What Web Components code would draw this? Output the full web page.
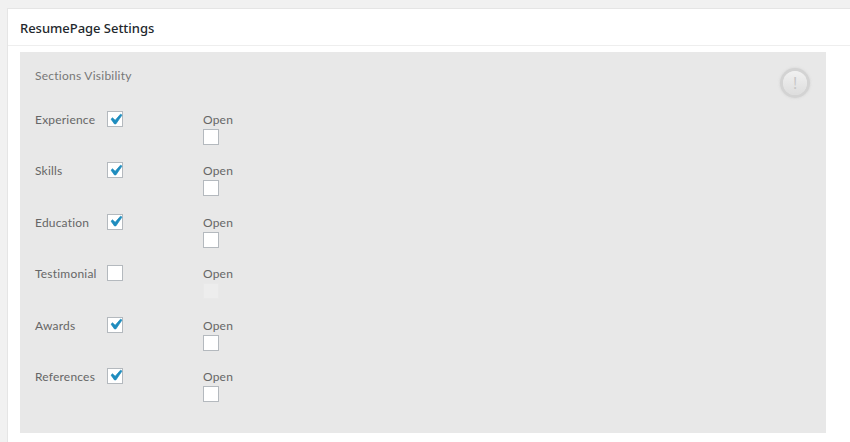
<!DOCTYPE html>
<html>
<head>
<meta charset="utf-8">
<style>
html, body { margin: 0; height: 100%; overflow: hidden; background: #f1f1f1; }
body { padding: 8px 0 0 7px; box-sizing: border-box; font-family: Lato, sans-serif; }
</style>
</head>
<body>
<settings-panel heading="ResumePage Settings">
  <visibility-box heading="Sections Visibility">
    <section-row label="Experience" checked></section-row>
    <section-row label="Skills" checked></section-row>
    <section-row label="Education" checked></section-row>
    <section-row label="Testimonial" locked></section-row>
    <section-row label="Awards" checked></section-row>
    <section-row label="References" checked></section-row>
  </visibility-box>
</settings-panel>
<script>
class SettingsPanel extends HTMLElement {
    constructor() {
        super();
        this.attachShadow({ mode: 'open' });
    }

    connectedCallback() {
        this.shadowRoot.innerHTML = `
            <style>
                :host {
                    display: block;
                    height: 100%;
                    box-sizing: border-box;
                    overflow: hidden;
                    background: #fff;
                    border: 1px solid #e5e5e5;
                    border-width: 1px 0 0 1px;
                }
                h2 {
                    margin: 0;
                    height: 37px;
                    box-sizing: border-box;
                    padding: 9px 0 0 12px;
                    font: 500 13px/20px "Noto Sans", sans-serif;
                    letter-spacing: -0.03px;
                    color: #23282d;
                    border-bottom: 1px solid #eee;
                }
                .body { padding: 6px 0 0 12px; }
            </style>
            <h2>${this.getAttribute('heading')}</h2>
            <div class="body"><slot></slot></div>
        `;
    }
}

class VisibilityBox extends HTMLElement {
    constructor() {
        super();
        this.attachShadow({ mode: 'open' });
    }

    connectedCallback() {
        this.shadowRoot.innerHTML = `
            <style>
                :host {
                    display: block;
                    position: relative;
                    width: 806px;
                    height: 381px;
                    box-sizing: border-box;
                    padding: 16px 15px 0;
                    background: #e8e8e8;
                }
                h3 {
                    margin: 0 0 27px;
                    font: 400 12px/16px Lato, sans-serif;
                    letter-spacing: 0.25px;
                    color: #777;
                }
                .alert {
                    position: absolute;
                    top: 19px;
                    right: 19px;
                    width: 24px;
                    height: 24px;
                    border-radius: 50%;
                    background: linear-gradient(#f1f1f1, #dddddd);
                    box-shadow: 0 0 0 3px #d3d3d3, 0 0 2px 4px #dedede;
                    color: #c6c6c6;
                    font: 400 16px/24px "Open Sans", sans-serif;
                    text-align: center;
                }
            </style>
            <h3>${this.getAttribute('heading')}</h3>
            <div class="alert">!</div>
            <slot></slot>
        `;
    }
}

class SectionRow extends HTMLElement {
    constructor() {
        super();
        this.attachShadow({ mode: 'open' });
    }

    connectedCallback() {
        const checked = this.hasAttribute('checked');
        const locked = this.hasAttribute('locked');
        const tick = `<svg width="21" height="21" viewBox="0 0 20 20"><path fill="#1e8cbe" stroke="#1e8cbe" stroke-width="0.7" d="M14.83 4.89l1.34.94-5.81 8.38H9.02L5.78 9.67l1.34-1.25 2.57 2.4z"/></svg>`;
        this.shadowRoot.innerHTML = `
            <style>
                :host {
                    display: grid;
                    grid-template-columns: 72px 96px auto;
                    height: 51.4px;
                    font: 400 12px/17px Lato, sans-serif;
                    color: #666;
                    letter-spacing: 0.2px;
                }
                .box {
                    width: 14px;
                    height: 14px;
                    border: 1px solid #b4b9be;
                    background: #fff;
                    display: flex;
                    align-items: center;
                    justify-content: center;
                }
                .box svg { flex: none; }
                .box.locked { background: #ededed; border-color: #e9e9e9; }
                .open .box { margin-top: 1px; }
            </style>
            <div class="label">${this.getAttribute('label')}</div>
            <div class="toggle"><div class="box">${checked ? tick : ''}</div></div>
            <div class="open">Open<div class="box ${locked ? 'locked' : ''}"></div></div>
        `;
    }
}

customElements.define('settings-panel', SettingsPanel);
customElements.define('visibility-box', VisibilityBox);
customElements.define('section-row', SectionRow);
</script>
</body>
</html>
